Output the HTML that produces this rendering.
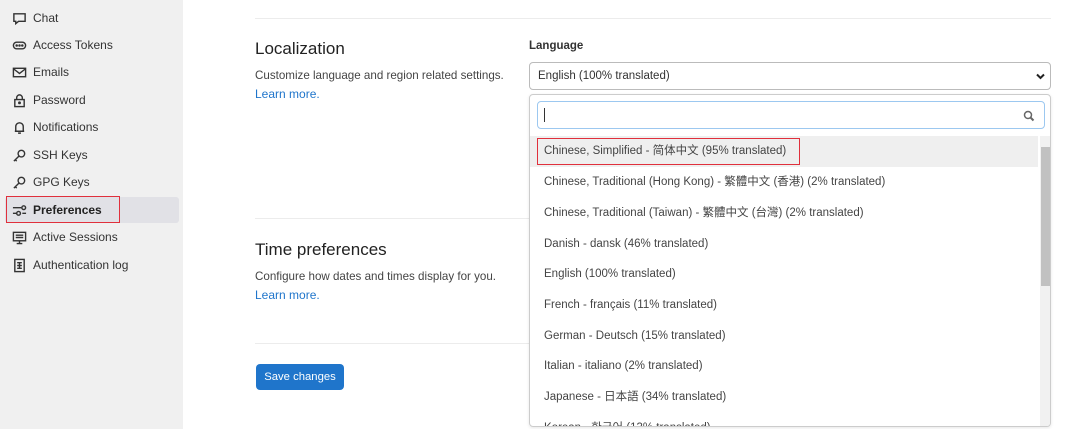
<!DOCTYPE html>
<html><head><meta charset="utf-8"><style>
*{margin:0;padding:0;box-sizing:border-box}
body{width:1080px;height:429px;overflow:hidden;background:#fff;font-family:"Liberation Sans","Noto Sans CJK SC",sans-serif;color:#333;position:relative;font-size:12px}
.sb{position:absolute;left:0;top:0;width:183px;height:429px;background:#f0f0f0}
.it{position:absolute;left:12px;height:20px;line-height:20px;font-size:12px;color:#333;display:flex;align-items:center}
.it svg{width:15px;height:15px;margin-right:6px;fill:none;stroke:#333;stroke-width:1.5}
.a{position:absolute}
.hr{position:absolute;left:255px;width:796px;height:1px;background:#ececec}
h2{position:absolute;font-size:17px;font-weight:normal;color:#222;left:255px}
.d{position:absolute;left:255px;font-size:11.6px;color:#444}
.l{position:absolute;left:255px;font-size:12px;color:#1f75cb}
.opt{position:absolute;left:544px;font-size:11.5px;color:#444;line-height:14px;height:14px}
</style></head><body>
<div class="sb">
<div class="a" style="left:5px;top:197px;width:174px;height:26px;background:#e1e1e6;border-radius:3px"></div>
<div class="a" style="left:6px;top:196px;width:114px;height:27px;border:1.5px solid #e0303c"></div>
<div class="it" style="top:8px"><svg viewBox="0 0 16 16"><path d="M2 3h12v8H7l-3 2.5V11H2z"/></svg>Chat</div>
<div class="it" style="top:35px"><svg viewBox="0 0 16 16"><rect x="1.5" y="4.5" width="13" height="7" rx="3.5"/><circle cx="5" cy="8" r=".6" fill="#333"/><circle cx="8" cy="8" r=".6" fill="#333"/><circle cx="11" cy="8" r=".6" fill="#333"/></svg>Access Tokens</div>
<div class="it" style="top:62px"><svg viewBox="0 0 16 16"><rect x="1.5" y="3.5" width="13" height="9"/><path d="M1.5 4l6.5 5 6.5-5"/></svg>Emails</div>
<div class="it" style="top:90px"><svg viewBox="0 0 16 16"><rect x="3" y="7" width="10" height="7.5"/><path d="M5 7V5a3 3 0 016 0v2"/><circle cx="8" cy="10.5" r=".8" fill="#333"/></svg>Password</div>
<div class="it" style="top:117px"><svg viewBox="0 0 16 16"><path d="M4 12V7a4 4 0 018 0v5H3h10M6.5 14h3"/></svg>Notifications</div>
<div class="it" style="top:145px"><svg viewBox="0 0 16 16"><circle cx="10" cy="6" r="3.5"/><path d="M7.5 8.5L2 14m1.5-1.5l1.5 1.5"/></svg>SSH Keys</div>
<div class="it" style="top:172px"><svg viewBox="0 0 16 16"><circle cx="10" cy="6" r="3.5"/><path d="M7.5 8.5L2 14m1.5-1.5l1.5 1.5"/></svg>GPG Keys</div>
<div class="it" style="top:200px;font-weight:bold;color:#222"><svg viewBox="0 0 16 16"><path d="M1 5h9M1 11h4M11 11h4"/><circle cx="12.5" cy="5" r="2"/><circle cx="7" cy="11" r="2"/></svg>Preferences</div>
<div class="it" style="top:227px"><svg viewBox="0 0 16 16"><rect x="1.5" y="2.5" width="13" height="9"/><path d="M4 5.5h8M4 8h8M8 11.5v3M5 14.5h6"/></svg>Active Sessions</div>
<div class="it" style="top:255px"><svg viewBox="0 0 16 16"><rect x="3" y="1.5" width="10" height="13"/><path d="M5.5 5h5M5.5 8h5M5.5 11h5M8 5v6"/></svg>Authentication log</div>
</div>
<div class="hr" style="top:18px"></div>
<h2 style="top:39px">Localization</h2>
<div class="d" style="top:69px">Customize language and region related settings.</div>
<div class="l" style="top:87px">Learn more.</div>
<div class="hr" style="top:218px;width:274px"></div>
<h2 style="top:240px">Time preferences</h2>
<div class="d" style="top:270px">Configure how dates and times display for you.</div>
<div class="l" style="top:288px">Learn more.</div>
<div class="hr" style="top:343px;width:274px"></div>
<div class="a" style="left:256px;top:364px;width:88px;height:26px;background:#1f75cb;border-radius:4px;color:#fff;font-size:11.3px;line-height:26px;text-align:center">Save changes</div>
<div class="a" style="left:529px;top:40px;font-size:11.5px;font-weight:bold;color:#333">Language</div>
<div class="a" style="left:529px;top:62px;width:522px;height:28px;border:1px solid #bbb;border-radius:4px;font-size:11.5px;line-height:26px;padding-left:8px;color:#333">English (100% translated)<svg style="position:absolute;right:5px;top:10px" width="9" height="7" viewBox="0 0 9 7"><path d="M1 1.5l3.5 3.5 3.5-3.5" stroke="#222" stroke-width="2" fill="none"/></svg></div>
<div class="a" style="left:529px;top:94px;width:522px;height:333px;border:1px solid #ccc;border-radius:4px;overflow:hidden;box-shadow:0 1px 3px rgba(0,0,0,.1)">
<div class="a" style="left:7px;top:6px;width:508px;height:28px;border:1px solid #9cc8f0;border-radius:4px"><div class="a" style="left:6px;top:6px;width:1px;height:14px;background:#333"></div><svg class="a" style="left:485px;top:8px" width="12" height="12" viewBox="0 0 12 12"><circle cx="5" cy="5" r="3.5" stroke="#666" stroke-width="1.5" fill="none"/><path d="M7.5 7.5l3 3" stroke="#666" stroke-width="2"/></svg></div>
<div class="a" style="left:0;top:41px;width:508px;height:31px;background:#efefef"></div>
<div class="a" style="left:7px;top:43px;width:263px;height:27px;border:1.5px solid #e0303c"></div>
<div class="a" style="left:510px;top:41px;width:11px;height:292px;background:#f1f1f1"></div>
<div class="a" style="left:511px;top:52px;width:9px;height:139px;background:#c1c1c1"></div>
</div>
<div class="opt" style="top:144px">Chinese, Simplified - 简体中文 (95% translated)</div>
<div class="opt" style="top:175px">Chinese, Traditional (Hong Kong) - 繁體中文 (香港) (2% translated)</div>
<div class="opt" style="top:206px">Chinese, Traditional (Taiwan) - 繁體中文 (台灣) (2% translated)</div>
<div class="opt" style="top:237px">Danish - dansk (46% translated)</div>
<div class="opt" style="top:267px">English (100% translated)</div>
<div class="opt" style="top:298px">French - français (11% translated)</div>
<div class="opt" style="top:329px">German - Deutsch (15% translated)</div>
<div class="opt" style="top:359px">Italian - italiano (2% translated)</div>
<div class="opt" style="top:390px">Japanese - 日本語 (34% translated)</div>
<div style="position:absolute;left:530px;top:421px;width:508px;height:5px;overflow:hidden"><div class="opt" style="left:14px;top:0">Korean - 한국어 (13% translated)</div></div>
</body></html>
